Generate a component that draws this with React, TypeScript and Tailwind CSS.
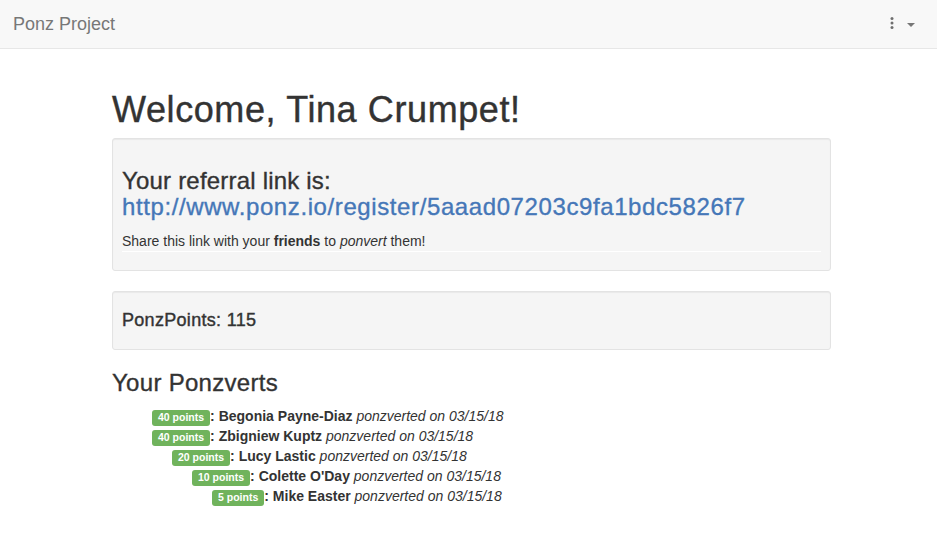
type Ponzvert = {
  points: number;
  name: string;
  date: string;
  indent: string;
};

const ponzverts: Ponzvert[] = [
  { points: 40, name: 'Begonia Payne-Diaz', date: '03/15/18', indent: 'pl-[40px]' },
  { points: 40, name: 'Zbigniew Kuptz', date: '03/15/18', indent: 'pl-[40px]' },
  { points: 20, name: 'Lucy Lastic', date: '03/15/18', indent: 'pl-[60px]' },
  { points: 10, name: "Colette O'Day", date: '03/15/18', indent: 'pl-[80px]' },
  { points: 5, name: 'Mike Easter', date: '03/15/18', indent: 'pl-[100px]' },
];

function Navbar() {
  return (
    <nav className="flex h-[49px] items-center justify-between border-b border-[#e7e7e7] bg-[#f8f8f8]">
      <span className="pb-[1px] pl-[13px] text-[18px] leading-[20px] text-[#777]">Ponz Project</span>
      <div className="flex items-center gap-[13px] pr-[22px]">
        <svg width="4" height="12" viewBox="0 0 4 12" className="mt-[-2px]">
          <circle cx="2" cy="1.6" r="1.5" fill="#6f6f6f" />
          <circle cx="2" cy="6" r="1.5" fill="#6f6f6f" />
          <circle cx="2" cy="10.4" r="1.5" fill="#6f6f6f" />
        </svg>
        <svg width="8" height="4" viewBox="0 0 8 4" className="mt-[2px]">
          <polygon points="0,0 8,0 4,4" fill="#777" />
        </svg>
      </div>
    </nav>
  );
}

function PointsLabel({ points }: { points: number }) {
  return (
    <span className="inline-block rounded-[3px] bg-[#70b35c] px-[6px] pt-[2px] pb-[3px] align-baseline text-[10.5px] font-bold leading-none text-white">
      {points} points
    </span>
  );
}

export default function App() {
  return (
    <div className="min-h-screen bg-white font-['Liberation_Sans',Arial,sans-serif] text-[14px] leading-[20px] text-[#333]">
      <Navbar />
      <main className="ml-[112px] flex w-[719px] flex-col">
        <h1 className="mt-[41px] mb-[8px] text-[36px] leading-[40px] tracking-[0.6px] [-webkit-text-stroke:0.4px_currentColor]">
          Welcome, Tina Crumpet!
        </h1>

        <div className="rounded-[3px] border border-[#e3e3e3] bg-[#f5f5f5] px-[9px] pt-[29px] pb-[9px] shadow-[inset_0_1px_1px_rgba(0,0,0,0.05)]">
          <h3 className="mb-[10px] text-[24px] leading-[26.4px] [-webkit-text-stroke:0.35px_currentColor]">
            <span className="block tracking-[0.2px]">Your referral link is:</span>
            <a href="#" className="block tracking-[0.6px] text-[#4577b8]">
              http://www.ponz.io/register/5aaad07203c9fa1bdc5826f7
            </a>
          </h3>
          <p>
            Share this link with your <strong>friends</strong> to <em>ponvert</em> them!
          </p>
          <hr className="mb-[9px] border-t border-white" />
        </div>

        <div className="mt-[20px] rounded-[3px] border border-[#e3e3e3] bg-[#f5f5f5] px-[9px] py-[19px] shadow-[inset_0_1px_1px_rgba(0,0,0,0.05)]">
          <h4 className="text-[18px] leading-[19px] tracking-[0.3px] [-webkit-text-stroke:0.4px_currentColor]">
            PonzPoints: 115
          </h4>
        </div>

        <h3 className="mt-[20px] mb-[10px] text-[24px] leading-[26.4px] tracking-[0.3px] [-webkit-text-stroke:0.35px_currentColor]">
          Your Ponzverts
        </h3>
        <ul>
          {ponzverts.map((p) => (
            <li key={p.name} className={p.indent}>
              <PointsLabel points={p.points} />
              <strong>: {p.name}</strong> <em>ponzverted on {p.date}</em>
            </li>
          ))}
        </ul>
      </main>
    </div>
  );
}
